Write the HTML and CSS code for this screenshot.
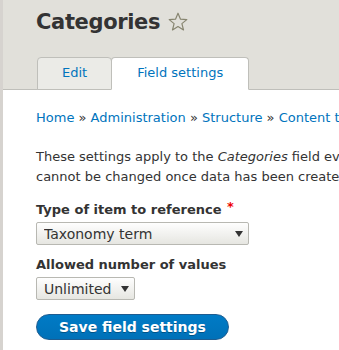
FILE: index.html
```html
<!DOCTYPE html>
<html lang="en">
<head>
    <meta charset="UTF-8">
    <title>Categories | Field settings</title>
    <link rel="stylesheet" href="styles.css">
</head>
<body>
    <div class="header">
        <h1 class="page-title">
            Categories
            <svg class="star" width="20" height="20" viewBox="0 0 20 20">
                <path d="M10 1.2 L12.5 7.2 L18.8 7.6 L13.9 11.6 L15.5 17.9 L10 14.5 L4.5 17.9 L6.1 11.6 L1.2 7.6 L7.5 7.2 Z" fill="none" stroke="#878570" stroke-width="1.2" stroke-linejoin="round"/>
            </svg>
        </h1>
        <ul class="tabs">
            <li><a href="#">Edit</a></li>
            <li><a href="#" class="active">Field settings</a></li>
        </ul>
    </div>

    <div class="content">
        <div class="breadcrumb">
            <a href="#">Home</a> » <a href="#">Administration</a> » <a href="#">Structure</a> » <a href="#">Content types</a> » <a href="#">Article</a> » <a href="#">Manage fields</a>
        </div>

        <p class="intro">These settings apply to the <em>Categories</em> field everywhere it is used. These settings impact the way that data is stored in the database and<br>cannot be changed once data has been created.</p>

        <form onsubmit="event.preventDefault();">
            <div class="form-item">
                <label for="target-type">Type of item to reference <span class="required">*</span></label>
                <span class="select-wrap">
                    <select id="target-type" class="select-wide">
                        <option>Taxonomy term</option>
                        <option>Content</option>
                        <option>User</option>
                    </select>
                </span>
            </div>

            <div class="form-item">
                <label for="cardinality">Allowed number of values</label>
                <span class="select-wrap">
                    <select id="cardinality">
                        <option>Unlimited</option>
                        <option>Limited</option>
                    </select>
                </span>
            </div>

            <button type="submit" class="btn">Save field settings</button>
        </form>
    </div>
</body>
</html>
```

FILE: styles.css
```css
* {
    margin: 0;
    padding: 0;
    box-sizing: border-box;
}

html {
    overflow: hidden;
}

body {
    font-family: "DejaVu Sans", sans-serif;
    font-size: 13px;
    color: #333;
    background: #fff;
    border-left: 3px solid #d6d3cf;
    min-height: 100vh;
    width: 1400px;
}

.header {
    background: #e1e0da;
    padding: 10px 33px 0;
    border-bottom: 1px solid #bfbfba;
}

.page-title {
    font-size: 21px;
    line-height: 24px;
    font-weight: bold;
    color: #333;
    letter-spacing: -0.35px;
    margin-bottom: 23px;
    display: flex;
    align-items: center;
    gap: 8px;
}

.star {
    margin-top: -1px;
}

.tabs {
    list-style: none;
    display: flex;
    margin: 0 0 -1px 1px;
}

.tabs a {
    display: block;
    padding: 6px 24px 7px;
    line-height: 18px;
    color: #0074bd;
    text-decoration: none;
    background: #ebebe7;
    border: 1px solid #bfbfba;
    border-radius: 4px 4px 0 0;
}

.tabs a.active {
    background: #fff;
    border-bottom-color: #fff;
    padding: 6px 25px 7px;
    margin-left: -1px;
}

.content {
    padding: 18px 33px 0;
}

.breadcrumb {
    line-height: 20px;
    white-space: nowrap;
    margin-bottom: 19px;
}

.breadcrumb a {
    color: #0074bd;
    text-decoration: none;
}

.intro {
    line-height: 20px;
    margin-bottom: 14px;
    white-space: nowrap;
}

.form-item {
    margin-bottom: 11px;
}

.form-item label {
    display: block;
    font-weight: bold;
    line-height: 18px;
    margin-bottom: 3px;
}

.required {
    color: #e00;
    position: relative;
    top: -3px;
    margin-left: 1px;
}

.select-wrap {
    position: relative;
    display: inline-block;
}

.select-wrap::after {
    content: "";
    position: absolute;
    right: 6px;
    top: 9px;
    border-left: 4px solid transparent;
    border-right: 4px solid transparent;
    border-top: 6px solid #333;
    pointer-events: none;
}

select {
    appearance: none;
    -webkit-appearance: none;
    font-family: "DejaVu Sans", sans-serif;
    font-size: 14px;
    color: #333;
    height: 23px;
    padding: 0 22px 0 7px;
    border: 1px solid #b8b8b2;
    border-radius: 2px;
    background: linear-gradient(#fefefe, #e6e6e1);
}

.select-wide {
    width: 213px;
}

.btn {
    font-family: "DejaVu Sans", sans-serif;
    font-size: 14px;
    font-weight: bold;
    color: #fff;
    height: 26px;
    padding: 0 22px;
    margin-top: 3px;
    border: 1px solid #1e5c90;
    border-radius: 20px;
    background: linear-gradient(#007bc6, #0071b8);
    text-shadow: 0 1px 0 rgba(0, 0, 0, 0.3);
    cursor: pointer;
}

.btn:hover {
    background: #0064a6;
}
```
